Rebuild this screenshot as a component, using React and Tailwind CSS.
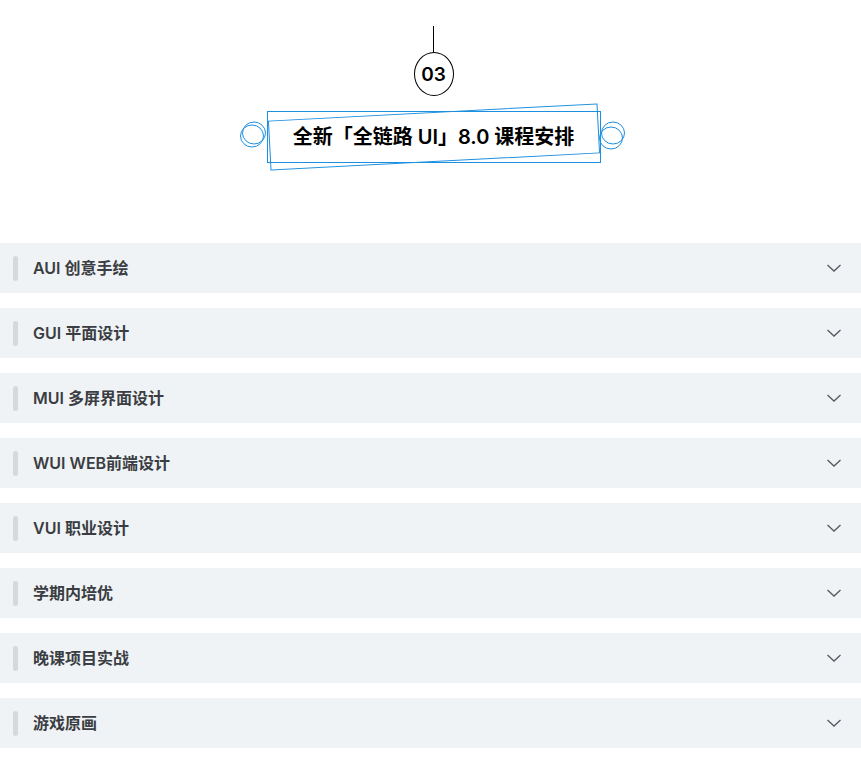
import React from "react";

const items = [
  "AUI 创意手绘",
  "GUI 平面设计",
  "MUI 多屏界面设计",
  "WUI WEB前端设计",
  "VUI 职业设计",
  "学期内培优",
  "晚课项目实战",
  "游戏原画",
];

function Rings({ flip }) {
  return (
    <svg width="30" height="32" viewBox="0 0 30 32" className="absolute top-[7px]" style={flip ? { right: -29 } : { left: -31 }}>
      {flip ? (
        <>
          <ellipse cx="14" cy="14" rx="11.5" ry="11" fill="none" stroke="#1c8fe0" strokeWidth="1" />
          <ellipse cx="12" cy="19" rx="11.5" ry="11" fill="none" stroke="#1c8fe0" strokeWidth="1" />
        </>
      ) : (
        <>
          <ellipse cx="17" cy="14" rx="11.5" ry="11" fill="none" stroke="#1c8fe0" strokeWidth="1" />
          <ellipse cx="15" cy="17" rx="11.5" ry="11" fill="none" stroke="#1c8fe0" strokeWidth="1" />
        </>
      )}
    </svg>
  );
}

function Row({ label }) {
  return (
    <div className="flex h-[50px] items-center bg-[#f0f3f6] pl-[13px] pr-[19px]">
      <span className="h-[25px] w-[5px] rounded-full bg-[#d5d8dd]" />
      <span className="ml-[15px] flex-1 text-[16px] font-semibold text-[#3a3d42]">{label}</span>
      <svg width="16" height="10" viewBox="0 0 16 10">
        <polyline points="1.5,2 8,8 14.5,2" fill="none" stroke="#555a60" strokeWidth="1.3" />
      </svg>
    </div>
  );
}

export default function App() {
  return (
    <div
      className="min-h-[770px] w-[861px] bg-white"
      style={{ fontFamily: 'Inter, "Noto Sans CJK SC", sans-serif' }}
    >
      {/* header */}
      <div className="flex h-[243px] flex-col items-center pl-[6px] pt-[26px]">
        <div className="h-[26px] w-[1.5px] bg-black" />
        <div className="flex h-[44px] w-[40px] items-center justify-center rounded-[50%] border border-black text-[19px] font-semibold leading-none text-black">
          03
        </div>
        <div className="relative mt-[15px] flex h-[52px] w-[334px] items-center justify-center border border-[#1c8fe0]">
          <div className="absolute left-[1px] top-0 h-[50px] w-[330px] -rotate-[3deg] border border-[#1c8fe0]" />
          <Rings />
          <Rings flip />
          <span className="relative text-[20px] font-semibold text-black">全新「全链路 UI」8.0 课程安排</span>
        </div>
      </div>

      {/* list */}
      <div className="flex flex-col gap-[15px]">
        {items.map((t) => (
          <Row key={t} label={t} />
        ))}
      </div>
    </div>
  );
}
